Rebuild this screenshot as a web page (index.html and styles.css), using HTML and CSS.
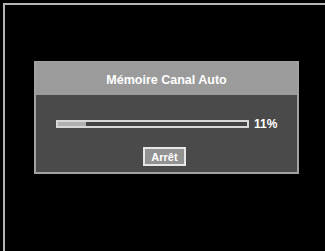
FILE: index.html
```html
<!DOCTYPE html>
<html>
<head>
<meta charset="utf-8">
<link rel="stylesheet" href="styles.css">
</head>
<body>
<div class="screen">
  <div class="dialog">
    <div class="header">Mémoire Canal Auto</div>
    <div class="content">
      <div class="progress-row">
        <div class="bar"><div class="fill" style="width:15%"></div></div>
        <span class="pct">11%</span>
      </div>
      <div class="btn">Arrêt</div>
    </div>
  </div>
</div>
</body>
</html>
```

FILE: styles.css
```css
html, body {
  margin: 0;
  padding: 0;
  background: #000;
  width: 325px;
  height: 251px;
  overflow: hidden;
}
body {
  padding: 3px 0 0 3px;
  box-sizing: border-box;
  font-family: "Liberation Sans", Arial, sans-serif;
}
.screen {
  height: 248px;
  border-top: 2px solid #b4b4b4;
  border-left: 2px solid #b4b4b4;
  box-sizing: border-box;
  background: #000;
  padding-top: 56px;
  padding-left: 29px;
}
.dialog {
  width: 265px;
  height: 113px;
  box-sizing: border-box;
  border: 2px solid #a2a2a2;
  border-top: 1px solid #a2a2a2;
  background: #4a4a4a;
  display: flex;
  flex-direction: column;
}
.header {
  height: 33px;
  padding-top: 3px;
  box-sizing: border-box;
  background: #9b9b9b;
  color: #fff;
  font-weight: bold;
  font-size: 12.5px;
  display: flex;
  align-items: center;
  justify-content: center;
}
.content {
  flex: 1;
  display: flex;
  flex-direction: column;
  align-items: center;
  padding-top: 22px;
}
.progress-row {
  display: flex;
  align-items: center;
  width: 100%;
  padding-left: 20px;
  box-sizing: border-box;
}
.bar {
  width: 193px;
  height: 8px;
  box-sizing: border-box;
  border: 2px solid #d8d8d8;
  background: #444;
}
.fill {
  height: 100%;
  background: #b0b0b0;
}
.pct {
  margin-left: 5px;
  color: #fff;
  font-weight: bold;
  font-size: 12px;
}
.btn {
  margin-top: 16px;
  margin-right: 4px;
  width: 43px;
  height: 19px;
  box-sizing: border-box;
  border: 2px solid #e6e6e6;
  background: #929292;
  color: #fff;
  font-weight: bold;
  font-size: 11px;
  display: flex;
  align-items: center;
  justify-content: center;
}
```
